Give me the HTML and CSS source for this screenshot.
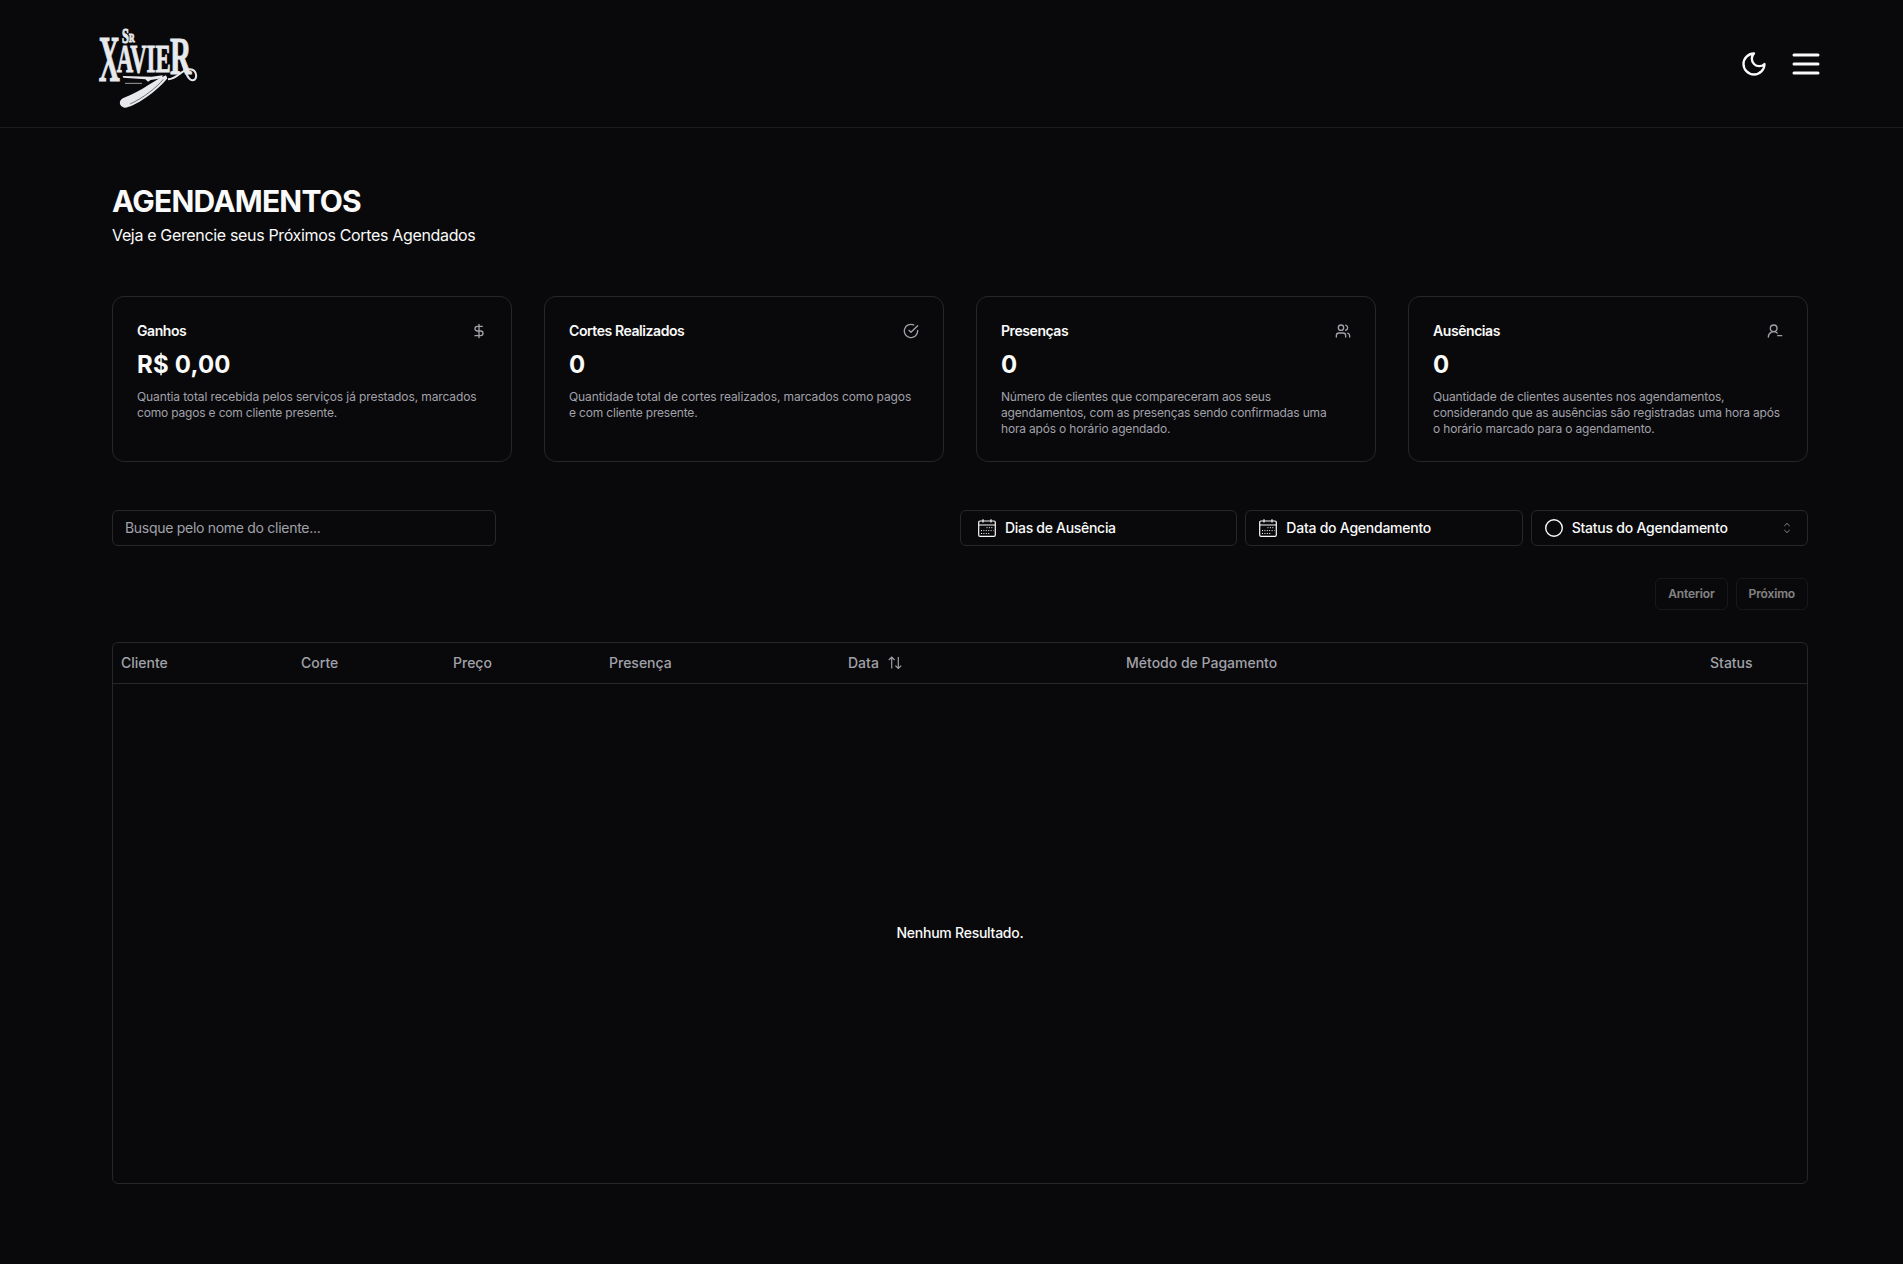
FILE: index.html
```html
<!DOCTYPE html>
<html lang="pt-BR">
<head>
<meta charset="utf-8">
<title>Agendamentos</title>
<link rel="stylesheet" href="styles.css">
</head>
<body>
<header class="topbar">
  <svg class="logo" viewBox="36 36 324 264" role="img" aria-label="Sr Xavier">
    <g class="logo-text">
      <text transform="translate(126 98) scale(.62 1)" font-size="60">S</text>
      <text transform="translate(147 95) scale(.62 1)" font-size="38">R</text>
      <text transform="translate(56 214) scale(.44 1)" font-size="199">X</text>
      <text transform="translate(110 187) scale(.555 1)" font-size="123">AVIE</text>
      <text transform="translate(270 192) scale(.56 1)" font-size="158">R</text>
    </g>
    <path class="logo-fill" d="M128 198L215 200L248 196L246 205L212 210L204 215L196 208L130 203Z"/>
    <path class="logo-line" d="M135 220H186" stroke-width="2"/>
    <path class="logo-line" d="M304 142C312 176 322 212 338 211C354 209 352 180 330 178C304 176 296 206 264 208" stroke-width="6"/>
    <path class="logo-fill" d="M258 196C228 206 190 242 130 264C115 271 116 290 134 293C160 294 232 244 262 205Z"/>
    <path class="logo-cut" d="M150 282C190 264 230 232 250 208"/>
  </svg>
  <div class="topbar-actions">
    <svg class="icon icon-moon" viewBox="0 0 24 24"><path d="M12 3a6 6 0 0 0 9 9 9 9 0 1 1-9-9Z"/></svg>
    <svg class="icon icon-menu" viewBox="0 0 24 24"><path d="M4 12h16M4 6h16M4 18h16"/></svg>
  </div>
</header>
<main class="page">
  <h1 class="title">AGENDAMENTOS</h1>
  <p class="subtitle">Veja e Gerencie seus Próximos Cortes Agendados</p>

  <section class="cards">
    <article class="card">
      <div class="card-head"><h2 class="card-title">Ganhos</h2>
        <svg class="icon icon-card" viewBox="0 0 24 24"><path d="M12 2v20M17 5H9.500a3.500 3.500 0 0 0 0 7h5a3.500 3.500 0 0 1 0 7H6"/></svg></div>
      <p class="card-value">R$ 0,00</p>
      <p class="card-text"><span class="loose">Quantia total recebida pelos serviços já prestados, marcados</span><br>como pagos e com cliente presente.</p>
    </article>
    <article class="card">
      <div class="card-head"><h2 class="card-title">Cortes Realizados</h2>
        <svg class="icon icon-card" viewBox="0 0 24 24"><path d="M22 11.080V12a10 10 0 1 1-5.930-9.140"/><path d="m9 11 3 3L22 4"/></svg></div>
      <p class="card-value">0</p>
      <p class="card-text"><span class="loose">Quantidade total de cortes realizados, marcados como pagos</span><br>e com cliente presente.</p>
    </article>
    <article class="card">
      <div class="card-head"><h2 class="card-title">Presenças</h2>
        <svg class="icon icon-card" viewBox="0 0 24 24"><path d="M16 21v-2a4 4 0 0 0-4-4H6a4 4 0 0 0-4 4v2"/><circle cx="9" cy="7" r="4"/><path d="M22 21v-2a4 4 0 0 0-3-3.870M16 3.130a4 4 0 0 1 0 7.750"/></svg></div>
      <p class="card-value">0</p>
      <p class="card-text">Número de clientes que compareceram aos seus<br>agendamentos, com as presenças sendo confirmadas uma<br>hora após o horário agendado.</p>
    </article>
    <article class="card">
      <div class="card-head"><h2 class="card-title">Ausências</h2>
        <svg class="icon icon-card" viewBox="0 0 24 24"><path d="M2 21a8 8 0 0 1 13.292-6"/><circle cx="10" cy="8" r="5"/><path d="M22 19h-6"/></svg></div>
      <p class="card-value">0</p>
      <p class="card-text">Quantidade de clientes ausentes nos agendamentos,<br>considerando que as ausências são registradas uma hora após<br>o horário marcado para o agendamento.</p>
    </article>
  </section>

  <section class="toolbar">
    <div class="search">Busque pelo nome do cliente...</div>
    <div class="filters">
      <button class="filter filter-wide"><svg class="icon-cal" viewBox="0 0 18 18"><path class="cal-frame" d="M2 2h14a1.300 1.300 0 0 1 1.300 1.300v12.700a1.300 1.300 0 0 1-1.300 1.300h-14a1.300 1.300 0 0 1-1.300-1.300v-12.700a1.300 1.300 0 0 1 1.300-1.300ZM.7 6h16.600M5 .3v3.300M13 .3v3.300"/><path class="cal-dots" d="M8.500 8.700h7M3 11.600h12.500M3 14.500h9.500"/></svg><span>Dias de Ausência</span></button>
      <button class="filter"><svg class="icon-cal" viewBox="0 0 18 18"><path class="cal-frame" d="M2 2h14a1.300 1.300 0 0 1 1.300 1.300v12.700a1.300 1.300 0 0 1-1.300 1.300h-14a1.300 1.300 0 0 1-1.300-1.300v-12.700a1.300 1.300 0 0 1 1.300-1.300ZM.7 6h16.600M5 .3v3.300M13 .3v3.300"/><path class="cal-dots" d="M8.500 8.700h7M3 11.600h12.500M3 14.500h9.500"/></svg><span>Data do Agendamento</span></button>
      <button class="filter"><svg class="icon-circle" viewBox="0 0 18 18"><circle cx="9" cy="9" r="8.300"/></svg><span>Status do Agendamento</span><svg class="icon-sort" viewBox="0 0 16 16"><path d="M5.300 6 8 3.400 10.700 6M5.300 10 8 12.600 10.700 10"/></svg></button>
    </div>
  </section>

  <nav class="pager"><button class="pager-btn" disabled>Anterior</button><button class="pager-btn" disabled>Próximo</button></nav>

  <div class="table-wrap">
    <table class="table">
      <colgroup><col class="c1"><col class="c2"><col class="c3"><col class="c4"><col class="c5"><col class="c6"><col></colgroup>
      <thead><tr><th>Cliente</th><th>Corte</th><th>Preço</th><th>Presença</th><th><div class="sortable">Data<svg class="icon-updown" viewBox="0 0 16 16"><path d="M1.800 5 4.700 2.100 7.600 5M4.700 2.100V13.500M8.400 10.600 11.300 13.500 14.200 10.600M11.300 13.500V2.100"/></svg></div></th><th>Método de Pagamento</th><th>Status</th></tr></thead>
      <tbody><tr><td colspan="7" class="empty">Nenhum Resultado.</td></tr></tbody>
    </table>
  </div>
</main>
</body>
</html>
```
FILE: styles.css
```css
* { box-sizing: border-box; margin: 0; padding: 0; }
body { background: #09090b; color: #fafafa; font-family: Inter, "Liberation Sans", sans-serif; font-size: 14px; line-height: 20px; }
button { font: inherit; color: inherit; background: none; text-align: left; }
.icon { fill: none; stroke: currentColor; stroke-width: 2; stroke-linecap: round; stroke-linejoin: round; }

.topbar { height: 128px; padding: 0 79px 0 92px; display: flex; align-items: center; justify-content: space-between; border-bottom: 1px solid #1c1c1f; }
.logo { width: 108px; height: 88px; margin-top: 5px; }
.logo-text { fill: #e8e9ed; stroke: #e8e9ed; stroke-width: 3; font-family: "Liberation Serif", serif; font-weight: 700; }
.logo-fill { fill: #e8e9ed; }
.logo-line { fill: none; stroke: #e8e9ed; }
.logo-cut { fill: none; stroke: #33343a; stroke-width: 2; }
.topbar-actions { display: flex; align-items: center; gap: 20px; }
.icon-moon { width: 28px; height: 28px; }
.icon-menu { width: 36px; height: 36px; }

.page { width: 1696px; margin-left: 112px; padding-top: 53px; }
.title { font-size: 30px; line-height: 40px; font-weight: 700; letter-spacing: -.8px; }
.subtitle { font-size: 16px; line-height: 24px; margin-top: 2px; letter-spacing: -.34px; }

.cards { display: grid; grid-template-columns: repeat(4, minmax(0, 1fr)); gap: 32px; margin-top: 49px; }
.card { height: 166px; padding: 24px; border: 1px solid #27272a; border-radius: 12px; }
.card-head { display: flex; justify-content: space-between; align-items: center; padding-bottom: 8px; }
.card-title { font-size: 14px; line-height: 20px; font-weight: 600; letter-spacing: -.43px; }
.card-value { font-size: 24px; line-height: 32px; font-weight: 700; letter-spacing: .2px; }
.card-text { font-size: 12px; line-height: 16px; color: #a1a1aa; margin-top: 8px; white-space: nowrap; letter-spacing: -.18px; }
.loose { letter-spacing: -.11px; }
.icon-card { width: 16px; height: 16px; color: #a1a1aa; }

.toolbar { display: flex; justify-content: space-between; margin-top: 48px; }
.search { width: 384px; height: 36px; border: 1px solid #27272a; border-radius: 6px; padding: 7px 12px; color: #a1a1aa; letter-spacing: -.29px; }
.filters { width: 848px; display: grid; grid-template-columns: repeat(3, 1fr); gap: 8px; }
.filter { height: 36px; border: 1px solid #27272a; border-radius: 6px; padding: 0 12px 0 13px; display: flex; align-items: center; gap: 9px; font-weight: 500; letter-spacing: -.24px; }
.filter-wide { padding: 0 17px; letter-spacing: -.3px; }
.icon-cal, .icon-circle { width: 18px; height: 18px; fill: none; stroke: #fafafa; }
.icon-circle { stroke-width: 1.4; }
.cal-frame { stroke-width: 1.2; }
.cal-dots { stroke-width: 1; stroke-dasharray: 1 1.400; }
.icon-sort { width: 16px; height: 16px; margin-left: auto; fill: none; stroke: #85858a; }

.pager { display: flex; justify-content: flex-end; gap: 8px; margin-top: 32px; }
.pager-btn { height: 32px; padding: 0 12px; border: 1px solid #27272a; border-radius: 6px; font-size: 12px; font-weight: 600; letter-spacing: -.13px; opacity: .5; }

.table-wrap { margin-top: 32px; height: 542px; border: 1px solid #27272a; border-radius: 6px; }
.table { width: 100%; border-collapse: separate; border-spacing: 0; table-layout: fixed; }
.table th { height: 41px; padding: 0 8px; text-align: left; font-weight: 500; color: #a1a1aa; border-bottom: 1px solid #27272a; }
.c1 { width: 180px; } .c2 { width: 152px; } .c3 { width: 156px; } .c4 { width: 239px; } .c5 { width: 278px; } .c6 { width: 584px; }
.sortable { display: flex; align-items: center; gap: 8px; }
.icon-updown { width: 16px; height: 16px; fill: none; stroke: currentColor; stroke-width: 1.200; }
.empty { height: 499px; padding-bottom: 2px; text-align: center; font-weight: 500; letter-spacing: -.25px; }
```
